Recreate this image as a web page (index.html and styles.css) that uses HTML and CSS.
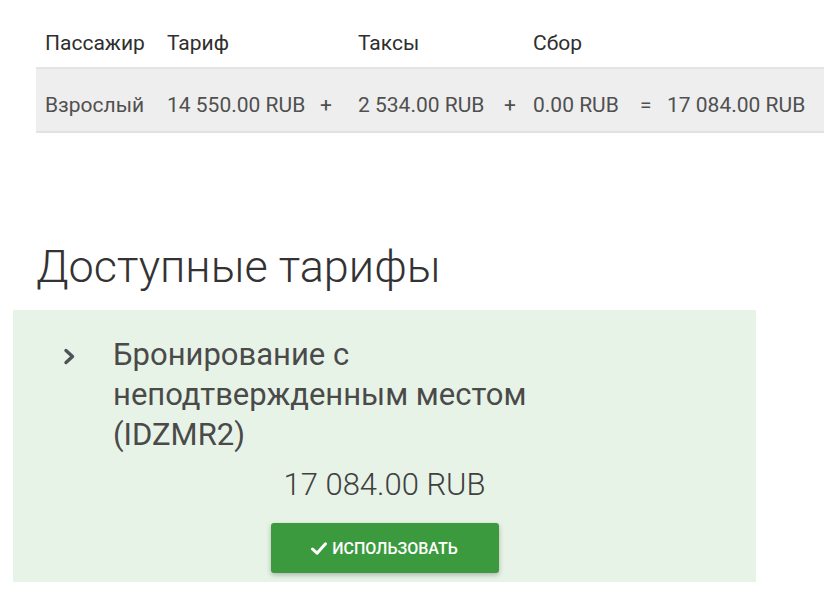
FILE: index.html
```html
<!DOCTYPE html>
<html lang="ru">
<head>
  <meta charset="UTF-8">
  <title>Тарифы</title>
  <link rel="stylesheet" href="styles.css">
</head>
<body>
  <div class="page">
    <table class="price-table">
      <colgroup>
        <col class="c-pax">
        <col class="c-fare">
        <col class="c-op1">
        <col class="c-tax">
        <col class="c-op2">
        <col class="c-fee">
        <col class="c-op3">
        <col class="c-total">
      </colgroup>
      <thead>
        <tr>
          <th>Пассажир</th>
          <th>Тариф</th>
          <th></th>
          <th>Таксы</th>
          <th></th>
          <th>Сбор</th>
          <th></th>
          <th></th>
        </tr>
      </thead>
      <tbody>
        <tr>
          <td>Взрослый</td>
          <td>14 550.00 RUB</td>
          <td class="op op-first">+</td>
          <td>2 534.00 RUB</td>
          <td class="op">+</td>
          <td>0.00 RUB</td>
          <td class="op op-eq">=</td>
          <td>17 084.00 RUB</td>
        </tr>
      </tbody>
    </table>

    <h2 class="section-title">Доступные тарифы</h2>

    <div class="fare-card">
      <div class="fare-head">
        <svg class="chevron" width="13" height="17" viewBox="0 0 13 17">
          <path d="M3 2.5 L9.5 8.5 L3 14.5" fill="none" stroke="#4f5358" stroke-width="3.4" stroke-linecap="round" stroke-linejoin="round"/>
        </svg>
        <div class="fare-name">Бронирование с неподтвержденным местом (IDZMR2)</div>
      </div>
      <div class="fare-price">17 084.00 RUB</div>
      <div class="fare-actions">
        <button class="btn-use">
          <svg width="16" height="13" viewBox="0 0 16 13">
            <path d="M1.5 7 L6 11.2 L14.5 1.8" fill="none" stroke="#ffffff" stroke-width="3" stroke-linecap="round" stroke-linejoin="round"/>
          </svg>
          <span>использовать</span>
        </button>
      </div>
    </div>
  </div>
</body>
</html>
```

FILE: styles.css
```css
html, body {
  margin: 0;
  padding: 0;
  background: #ffffff;
  overflow: hidden;
}
body {
  font-family: Roboto, 'Noto Sans', sans-serif;
  color: #505050;
}
.page {
  padding-top: 31px;
}
.price-table {
  margin-left: 36px;
  width: 794px;
  border-collapse: collapse;
  table-layout: fixed;
  font-size: 21px;
  line-height: 24px;
}
.c-pax { width: 131px; }
.c-fare { width: 145px; }
.c-op1 { width: 46px; }
.c-tax { width: 139px; }
.c-op2 { width: 36px; }
.c-fee { width: 107px; }
.c-op3 { width: 27px; }
.c-total { width: 163px; }
.price-table th,
.price-table td {
  padding: 0;
  text-align: left;
  white-space: nowrap;
}
.price-table th {
  font-weight: 400;
  color: #2e2e2e;
  padding-bottom: 12px;
}
.price-table th:first-child,
.price-table td:first-child {
  padding-left: 9px;
}
.price-table tbody tr {
  background: #eeeeee;
  border-top: 2px solid #e4e4e4;
  border-bottom: 2px solid #e2e2e2;
}
.price-table td {
  padding-top: 24px;
  padding-bottom: 14px;
}
.price-table td.op {
  padding-left: 7px;
}
.price-table td.op-first {
  padding-left: 8px;
}
.price-table td.op-eq {
  padding-left: 0;
}
.section-title {
  margin: 108px 0 0 36px;
  font-size: 45px;
  font-weight: 300;
  line-height: 52px;
  color: #333333;
}
.fare-card {
  margin: 17px 0 0 13px;
  width: 743px;
  background: #e7f3e7;
  padding: 25px 0 9px;
  box-sizing: border-box;
}
.fare-head {
  display: flex;
  align-items: flex-start;
}
.chevron {
  margin: 13px 0 0 50px;
  flex: none;
}
.fare-name {
  margin-left: 37px;
  width: 460px;
  font-size: 31px;
  line-height: 40px;
  color: #4a4a4a;
}
.fare-price {
  margin-top: 10px;
  text-align: center;
  font-size: 31px;
  font-weight: 300;
  line-height: 40px;
  color: #404040;
}
.fare-actions {
  display: flex;
  justify-content: center;
  margin-top: 18px;
}
.btn-use {
  width: 228px;
  height: 50px;
  border: none;
  border-radius: 3px;
  background: #3b9a3e;
  color: #ffffff;
  font-family: Roboto, 'Noto Sans', sans-serif;
  font-size: 16px;
  font-weight: 500;
  text-transform: uppercase;
  display: flex;
  align-items: center;
  justify-content: center;
  gap: 5px;
  box-shadow: 0 2px 5px rgba(0, 0, 0, 0.25);
}
```
